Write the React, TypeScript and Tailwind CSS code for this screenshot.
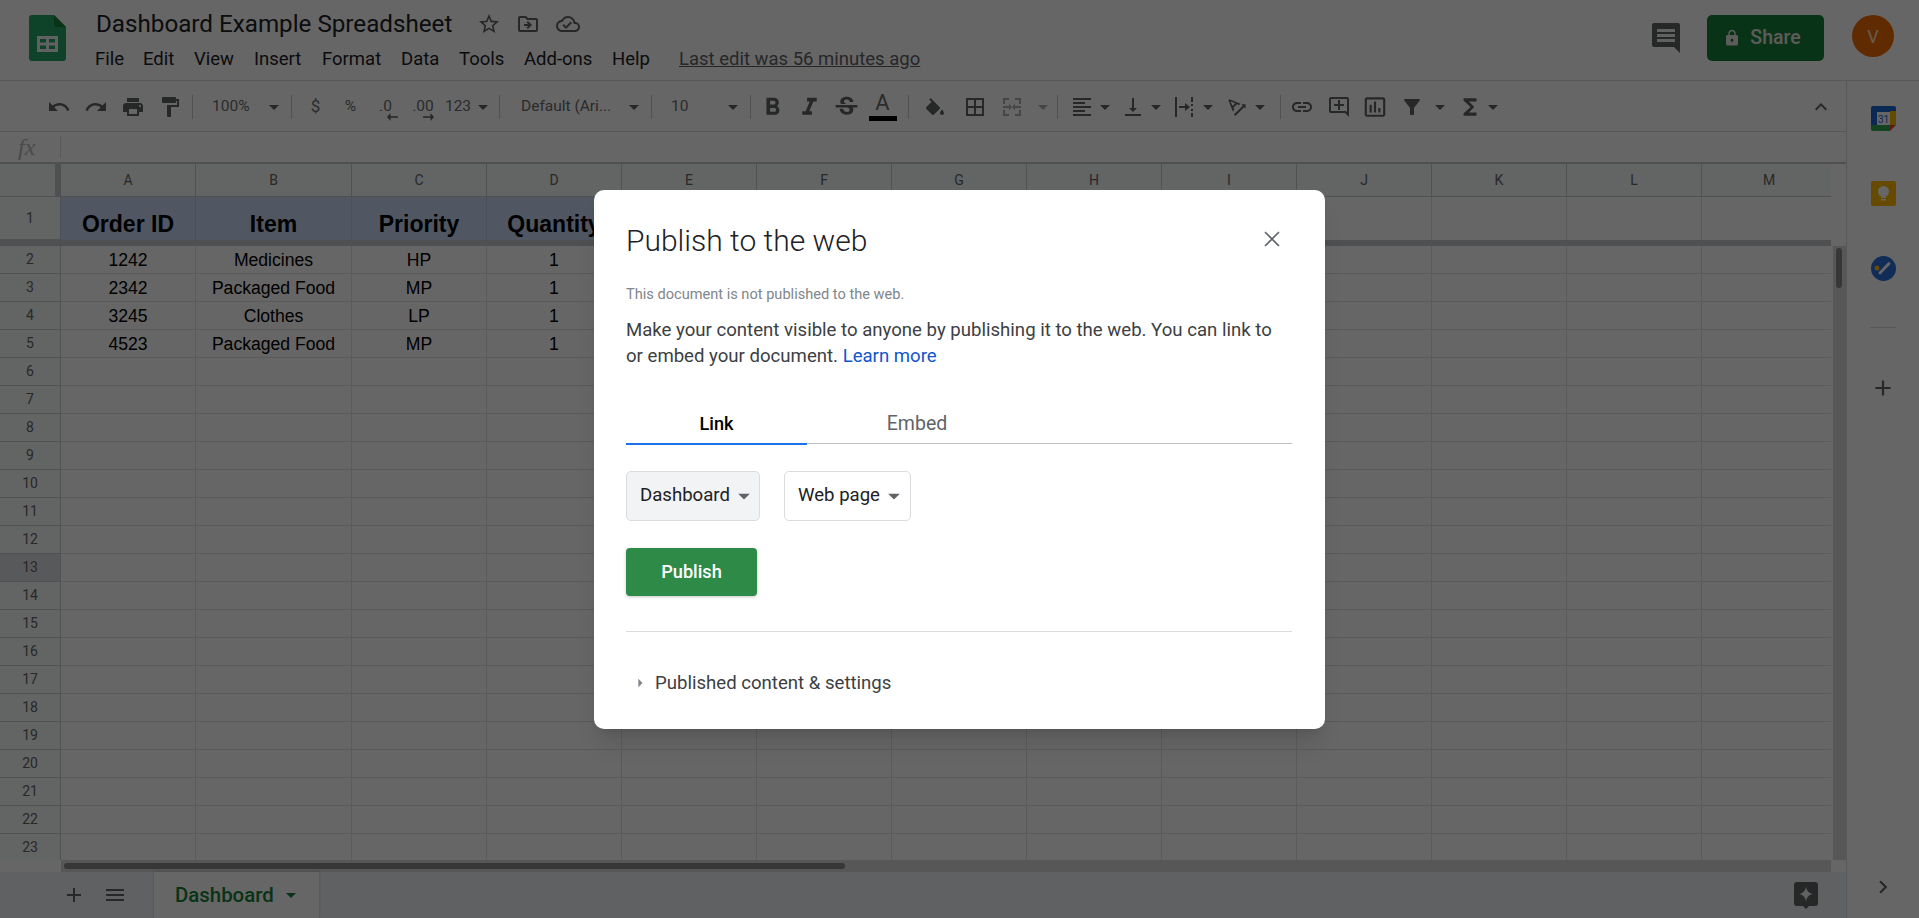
import {
  MdUndo, MdRedo, MdPrint, MdFormatPaint, MdFormatBold, MdFormatItalic, MdStrikethroughS,
  MdBorderAll, MdFormatAlignLeft, MdVerticalAlignBottom, MdLink, MdOutlineAddComment, MdInsertChartOutlined, MdFilterAlt,
  MdFunctions, MdExpandLess, MdStarBorder, MdOutlineDriveFileMove, MdOutlineCloudDone, MdLock, MdAdd,
  MdChevronRight, MdMenu, MdArrowDropDown, MdArrowRight, MdTextRotationAngleup,
} from 'react-icons/md'

const menus = [
  { name: 'File', cls: 'w-[48px]' },
  { name: 'Edit', cls: 'w-[51px]' },
  { name: 'View', cls: 'w-[60px]' },
  { name: 'Insert', cls: 'w-[68px]' },
  { name: 'Format', cls: 'w-[79px]' },
  { name: 'Data', cls: 'w-[58px]' },
  { name: 'Tools', cls: 'w-[65px]' },
  { name: 'Add-ons', cls: 'w-[88px]' },
  { name: 'Help', cls: 'w-[67px]' },
]

const columns = ['A', 'B', 'C', 'D', 'E', 'F', 'G', 'H', 'I', 'J', 'K', 'L', 'M']
const gridCols = 'grid grid-cols-[61px_135px_156px_135px_135px_135px_135px_135px_135px_135px_135px_135px_135px_135px]'

const rows = [
  ['1242', 'Medicines', 'HP', '1'],
  ['2342', 'Packaged Food', 'MP', '1'],
  ['3245', 'Clothes', 'LP', '1'],
  ['4523', 'Packaged Food', 'MP', '1'],
]

function Caret({ wide }: { wide?: boolean }) {
  return (
    <div className={`flex items-center justify-center ${wide ? 'w-6' : 'w-5'}`}>
      <MdArrowDropDown className="text-[24px] shrink-0 text-[#5f6163]" />
    </div>
  )
}

function Sep({ cls }: { cls: string }) {
  return <div className={`w-px h-[24px] bg-[#c9cbce] ${cls}`} />
}

function Toolbar() {
  const cell = 'w-[37px] flex items-center justify-center text-[24px] text-[#5f6163]'
  const big = 'w-[37px] flex items-center justify-center text-[29px] text-[#5f6163]'
  const narrow = 'w-[26px] flex items-center justify-center text-[24px] text-[#5f6163]'
  const label = 'text-[15.500px] text-[#6a6c6e]'
  return (
    <div className="h-[51px] shrink-0 flex items-center pl-10 pt-[2px] border-b border-[#dadce0]">
      <div className={cell}><MdUndo /></div>
      <div className={cell}><MdRedo /></div>
      <div className={cell}><MdPrint /></div>
      <div className={cell}><MdFormatPaint /></div>
      <Sep cls="ml-1" />
      <div className={`${label} ml-[19px] w-[40px]`}>100%</div>
      <div className="ml-[10px]"><Caret wide /></div>
      <Sep cls="ml-[5px]" />
      <div className={`${label} ml-[6px] w-[35px] text-center text-[17px]`}>$</div>
      <div className={`${label} w-[35px] text-center`}>%</div>
      <div className={`${label} w-[35px] text-center relative`}>
        .0
        <svg width="11" height="8" viewBox="0 0 11 8" className="absolute left-[19px] top-[18px]">
          <path d="M11 3.200H3.500V0L0 4l3.500 4V4.800H11z" fill="#5f6163" />
        </svg>
      </div>
      <div className={`${label} w-[40px] text-center relative`}>
        .00
        <svg width="11" height="8" viewBox="0 0 11 8" className="absolute left-[20px] top-[18px]">
          <path d="M0 3.200h7.500V0L11 4 7.500 8V4.800H0z" fill="#5f6163" />
        </svg>
      </div>
      <div className={`${label} w-[30px] text-center`}>123</div>
      <Caret />
      <Sep cls="ml-[6px]" />
      <div className={`${label} ml-[21px] w-[90px] whitespace-nowrap`}>Default (Ari...</div>
      <div className="ml-[11px]"><Caret wide /></div>
      <Sep cls="ml-[5px]" />
      <div className={`${label} ml-[19px] w-[20px]`}>10</div>
      <div className="ml-[30px]"><Caret wide /></div>
      <Sep cls="ml-[5px]" />
      <div className={`${big} ml-[3px]`}><MdFormatBold /></div>
      <div className={big}><MdFormatItalic /></div>
      <div className={big}><MdStrikethroughS /></div>
      <div className="w-[35px] flex flex-col items-center -mt-[3px]">
        <span className="text-[22px] leading-[25px] text-[#6a6c6e]">A</span>
        <div className="w-7 h-[5px] mt-[1px] bg-black" />
      </div>
      <Sep cls="ml-2" />
      <div className={`${cell} ml-[7px]`}>
        <svg width="24" height="24" viewBox="0 0 24 24" fill="#5f6163">
          <path d="M16.560 11.940L7.620 3 6.210 4.410l2.380 2.380-5.150 5.150c-.59.590-.59 1.540 0 2.120l5.500 5.500c.29.290.68.440 1.060.440s.770-.150 1.060-.440l5.500-5.500c.590-.580.590-1.530 0-2.120z" />
          <path d="M19 14.500s-2 2.170-2 3.500c0 1.100.9 2 2 2s2-.9 2-2c0-1.330-2-3.500-2-3.500z" />
        </svg>
      </div>
      <div className={`${cell} ml-[3px]`}><MdBorderAll /></div>
      <div className={`${cell} opacity-50`}>
        <svg width="24" height="24" viewBox="0 0 24 24" fill="#5f6163">
          <path d="M3 3h6v2H5v4H3zM15 3h6v6h-2V5h-4zM3 15h2v4h4v2H3zM19 15h2v6h-6v-2h4zM3 11h6V8.500l3 3.500-3 3.500V13H3zM21 11h-6V8.500L12 12l3 3.500V13h6z" />
        </svg>
      </div>
      <div className="ml-px opacity-50"><Caret wide /></div>
      <Sep cls="ml-[2px]" />
      <div className={`${narrow} ml-[11px]`}><MdFormatAlignLeft /></div>
      <Caret />
      <div className={`${narrow} ml-[5px]`}><MdVerticalAlignBottom /></div>
      <Caret />
      <div className={`${narrow} ml-[5px]`}>
        <svg width="24" height="24" viewBox="0 0 24 24" fill="#5f6163">
          <path d="M3 2h2v20H3zM19 2h2v5h-2zM19 9h2v2h-2zM19 14h2v2h-2zM19 18h2v4h-2zM7 11h6V8l5 4-5 4v-3H7z" />
        </svg>
      </div>
      <div className="ml-px"><Caret /></div>
      <div className={`${narrow} ml-[6px]`}><MdTextRotationAngleup /></div>
      <Caret />
      <Sep cls="ml-[10px]" />
      <div className={`${cell} ml-[2px]`}><MdLink /></div>
      <div className={cell}><MdOutlineAddComment /></div>
      <div className="w-[36px] flex items-center justify-center text-[26px] text-[#5f6163]"><MdInsertChartOutlined /></div>
      <div className={`${narrow} ml-[6px]`}><MdFilterAlt /></div>
      <div className="ml-[5px]"><Caret /></div>
      <div className={`${narrow} ml-[7px] text-[28px]`}><MdFunctions /></div>
      <Caret />
      <div className="ml-auto mr-[13px] w-6 flex justify-center text-[32px] text-[#5f6163]"><MdExpandLess /></div>
    </div>
  )
}

function Grid() {
  const cellBorder = 'border-r border-b border-[#e2e3e3]'
  const rowHead = 'border-r border-b border-[#c9cbce] flex items-center justify-center text-[14px] text-[#666] font-[family-name:Roboto]'
  return (
    <div className="flex-1 overflow-hidden font-[family-name:'Liberation_Sans'] text-black">
      <div className={`${gridCols} h-[33px]`}>
        <div className="border-r-[6px] border-b border-r-[#c4c7cc] border-b-[#c9cbce] bg-[#f8f9fa]" />
        {columns.map((c) => (
          <div key={c} className="border-r border-b border-[#c9cbce] bg-[#f8f9fa] flex items-center justify-center text-[14px] text-[#666] font-[family-name:Roboto]">
            {c}
          </div>
        ))}
      </div>
      <div className={`${gridCols} h-[43px]`}>
        <div className={`${rowHead} bg-[#f8f9fa]`}>1</div>
        {columns.map((c, i) => (
          <div
            key={c}
            className={`border-r flex items-end justify-center pb-[3px] text-[23px] leading-[26px] font-bold whitespace-nowrap ${
              i < 4 ? 'bg-[#c9daf8] border-[#b8c8e4]' : 'border-[#e2e3e3]'
            }`}
          >
            {i === 0 ? 'Order ID' : i === 1 ? 'Item' : i === 2 ? 'Priority' : i === 3 ? 'Quantity' : ''}
          </div>
        ))}
      </div>
      <div className="h-[6px] bg-[#c4c7cc]" />
      {Array.from({ length: 22 }, (_, r) => (
        <div key={r} className={`${gridCols} h-[28px]`}>
          <div className={`${rowHead} ${r === 11 ? 'bg-[#dcdee0]' : 'bg-[#f8f9fa]'}`}>{r + 2}</div>
          {columns.map((c, i) => (
            <div key={c} className={`${cellBorder} flex items-center justify-center pt-px text-[17.600px] whitespace-nowrap`}>
              {rows[r] && i < 4 ? rows[r][i] : ''}
            </div>
          ))}
        </div>
      ))}
    </div>
  )
}

function SheetsLogo() {
  return (
    <svg width="37" height="46" viewBox="0 0 37 46" className="shrink-0">
      <path d="M3 0h22l12 12v31a3 3 0 0 1-3 3H3a3 3 0 0 1-3-3V3a3 3 0 0 1 3-3z" fill="#23a566" />
      <path d="M25 0l12 12H28a3 3 0 0 1-3-3z" fill="#188038" />
      <path d="M8 21h21v16H8zM11 24v3.500h6V24zm9 0v3.500h6V24zm-9 6.500V34h6v-3.500zm9 0V34h6v-3.500z" fill="#f1f3f4" fillRule="evenodd" />
    </svg>
  )
}

function CalendarIcon() {
  return (
    <svg width="25" height="25" viewBox="0 0 25 25">
      <path d="M2 0h21a2 2 0 0 1 2 2v4H0V2a2 2 0 0 1 2-2z" fill="#1967d2" />
      <path d="M0 5h6v14H0z" fill="#1967d2" />
      <path d="M19 5h6v14h-6z" fill="#fbbc04" />
      <path d="M0 19h19v6H2a2 2 0 0 1-2-2z" fill="#34a853" />
      <path d="M19 19h6l-6 6z" fill="#ea4335" />
      <rect x="6" y="6" width="13" height="13" fill="#fff" />
      <text x="12.500" y="16.500" textAnchor="middle" fontSize="10" fontFamily="Roboto" fill="#1967d2">31</text>
    </svg>
  )
}

function KeepIcon() {
  return (
    <svg width="25" height="25" viewBox="0 0 25 25">
      <rect width="25" height="25" rx="2" fill="#ffba00" />
      <circle cx="12.500" cy="10.500" r="5.500" fill="#fff" />
      <rect x="10" y="14" width="5" height="3" fill="#fff" />
      <rect x="10" y="18" width="5" height="1.500" fill="#fff" />
    </svg>
  )
}

function TasksIcon() {
  return (
    <svg width="25" height="25" viewBox="0 0 25 25">
      <circle cx="12.500" cy="12.500" r="12.500" fill="#2f6fdb" />
      <path d="M9 17l9-9.500" stroke="#fff" strokeWidth="2.800" strokeLinecap="round" fill="none" />
      <circle cx="6" cy="12" r="2.500" fill="#fbbc04" />
    </svg>
  )
}

function ExploreIcon() {
  return (
    <svg width="24" height="27" viewBox="0 0 24 27">
      <path d="M3 0h18a3 3 0 0 1 3 3v18a3 3 0 0 1-3 3h-6l-3 3-3-3H3a3 3 0 0 1-3-3V3a3 3 0 0 1 3-3z" fill="#5f6163" />
      <path d="M12 4.500c.7 4.300 2.700 6.800 7.500 7.500-4.800.7-6.800 3.200-7.500 7.500-.7-4.300-2.700-6.800-7.500-7.500 4.800-.7 6.800-3.200 7.500-7.500z" fill="#f1f3f4" />
    </svg>
  )
}

function PublishDialog() {
  return (
    <div className="absolute left-[594px] top-[190px] w-[731px] h-[539px] bg-white rounded-[10px] pl-[32px] pr-[33px] pt-[30px] font-[family-name:Roboto] shadow-xl">
      <div className="flex items-center justify-between h-[42px]">
        <h1 className="text-[30px] font-light text-[#202124] leading-[42px]">Publish to the web</h1>
        <svg width="16" height="16" viewBox="0 0 16 16" className="mr-[12px] -mt-[4px]">
          <path d="M1 1l14 14M15 1L1 15" stroke="#5f6368" strokeWidth="1.600" fill="none" />
        </svg>
      </div>
      <p className="mt-[22px] text-[14.600px] leading-[20px] text-[#80868b]">This document is not published to the web.</p>
      <p className="mt-[13px] text-[18.600px] leading-[26px] text-[#3c4043] whitespace-nowrap">
        Make your content visible to anyone by publishing it to the web. You can link to
        <br />
        or embed your document. <span className="text-[#1155cc]">Learn more</span>
      </p>
      <div className="mt-[41px] flex h-[34px] border-b border-[#bdc1c6] relative">
        <div className="w-[181px] text-center text-[18.200px] font-medium leading-[28px] text-black border-b-2 border-[#1a73e8] h-[35px]">Link</div>
        <div className="ml-[35px] w-[150px] text-center text-[19.500px] leading-[28px] text-[#5f6368]">Embed</div>
      </div>
      <div className="mt-[27px] flex gap-[24px]">
        <div className="w-[134px] h-[50px] rounded-[5px] border border-[#dadce0] bg-[#f1f3f4] flex items-center pl-[13px] text-[18.600px] text-[#202124] whitespace-nowrap">
          Dashboard
          <MdArrowDropDown className="text-[28px] shrink-0 text-[#5f6368]" />
        </div>
        <div className="w-[127px] h-[50px] rounded-[5px] border border-[#dadce0] bg-white flex items-center pl-[13px] text-[18.600px] text-[#202124] whitespace-nowrap">
          Web page
          <MdArrowDropDown className="text-[28px] shrink-0 text-[#5f6368]" />
        </div>
      </div>
      <button className="mt-[27px] block w-[131px] h-[48px] rounded-[4px] bg-[#2d8a47] text-white text-[18.200px] font-medium shadow-[0_1px_3px_rgba(60,64,67,0.3)]">
        Publish
      </button>
      <div className="mt-[35px] border-t border-[#dadce0]" />
      <div className="mt-[38px] flex items-center text-[#3c4043] text-[18.600px] leading-[26px]">
        <MdArrowRight className="text-[20px] text-[#80868b] ml-[4px] mr-[5px]" />
        Published content &amp; settings
      </div>
    </div>
  )
}

export default function App() {
  return (
    <div className="relative w-[1919px] h-[918px] overflow-hidden bg-white flex flex-col font-[family-name:Roboto] text-[#202124]">
      <header className="h-[81px] shrink-0 flex border-b border-[#dadce0] pl-[29px] pt-[15px]">
        <SheetsLogo />
        <div className="ml-[26px] -mt-[3px]">
          <div className="flex items-center h-[26px] ml-[4px] -mt-px">
            <span className="text-[24.200px] leading-[26px] text-[#202124]">Dashboard Example Spreadsheet</span>
            <MdStarBorder className="ml-[25px] text-[24px] text-[#5f6163]" />
            <MdOutlineDriveFileMove className="ml-[15px] text-[24px] text-[#5f6163]" />
            <MdOutlineCloudDone className="ml-[16px] text-[24px] text-[#5f6163]" />
          </div>
          <nav className="flex items-center mt-[10px] ml-[3px] text-[18.500px] leading-[24px]">
            {menus.map((m) => (
              <span key={m.name} className={m.cls}>{m.name}</span>
            ))}
            <span className="text-[#5f6368] underline whitespace-nowrap">Last edit was 56 minutes ago</span>
          </nav>
        </div>
        <div className="ml-auto flex items-start">
          <svg width="28" height="32" viewBox="0 0 28 32" className="mt-[8px] mr-[27px]">
            <path d="M2 0h24a2 2 0 0 1 2 2v28l-6-6H2a2 2 0 0 1-2-2V2a2 2 0 0 1 2-2z" fill="#5f6163" />
            <path d="M5 6h18v3H5zM5 11h18v3H5zM5 16h18v3H5z" fill="#f1f3f4" />
          </svg>
          <div className="w-[117px] h-[46px] pr-[7px] rounded-[5px] bg-[#188038] flex items-center justify-center text-[19.500px] font-medium text-[#e6e6e6]">
            <MdLock className="text-[18px] mr-[9px]" />
            Share
          </div>
          <div className="ml-[28px] mr-[25px] w-[42px] h-[42px] rounded-full bg-[#ef6c00] text-white/80 flex items-center justify-center text-[18px]">
            V
          </div>
        </div>
      </header>

      <div className="flex-1 flex min-h-0">
        <main className="w-[1846px] flex flex-col min-h-0">
          <Toolbar />
          <div className="h-[32px] shrink-0 flex items-center border-b-2 border-[#c7c9cb]">
            <div className="w-[60px] pl-[18px] font-[family-name:'Liberation_Serif'] italic text-[24px] text-[#b8babc] leading-[28px]">fx</div>
            <div className="w-px h-[22px] bg-[#dadce0]" />
          </div>
          <div className="flex-1 flex min-h-0">
            <div className="w-[1831px] flex flex-col min-h-0 overflow-hidden">
              <Grid />
            </div>
            <div className="flex-1 flex flex-col pl-[2px]">
              <div className="h-[82px]" />
              <div className="flex-1 bg-[#d9d9d9] pt-[2px] pl-[3px]">
                <div className="w-[6px] h-[40px] rounded-full bg-[#8a8a8a]" />
              </div>
            </div>
          </div>
          <div className="h-[12px] shrink-0 flex pl-[61px] bg-white">
            <div className="w-[1770px] bg-[#d9d9d9] pt-[3px] pl-[3px]">
              <div className="w-[781px] h-[6px] rounded-full bg-[#8a8a8a]" />
            </div>
          </div>
          <footer className="h-[46px] shrink-0 flex items-center bg-[#f1f3f4]">
            <MdAdd className="ml-[62px] text-[24px] text-[#5f6163]" />
            <MdMenu className="ml-[17px] text-[24px] text-[#5f6163]" />
            <div className="ml-[27px] w-[165px] h-full bg-white flex items-center pl-[21px] text-[#188038] text-[20.400px] font-medium shadow-[0_0_3px_rgba(0,0,0,0.2)]">
              Dashboard
              <MdArrowDropDown className="ml-[5px] text-[24px]" />
            </div>
            <div className="ml-auto mr-[28px]"><ExploreIcon /></div>
          </footer>
        </main>
        <aside className="w-[73px] border-l border-[#dadce0] flex flex-col items-center pt-[25px] relative">
          <CalendarIcon />
          <div className="mt-[50px]"><KeepIcon /></div>
          <div className="mt-[50px]"><TasksIcon /></div>
          <div className="mt-[46px] w-[26px] h-px bg-[#dadce0]" />
          <MdAdd className="mt-[47px] text-[26px] text-[#5f6163]" />
          <MdChevronRight className="mt-auto mb-[18px] text-[26px] text-[#5f6163]" />
        </aside>
      </div>

      <div className="absolute inset-0 bg-black/60" />
      <PublishDialog />
    </div>
  )
}
